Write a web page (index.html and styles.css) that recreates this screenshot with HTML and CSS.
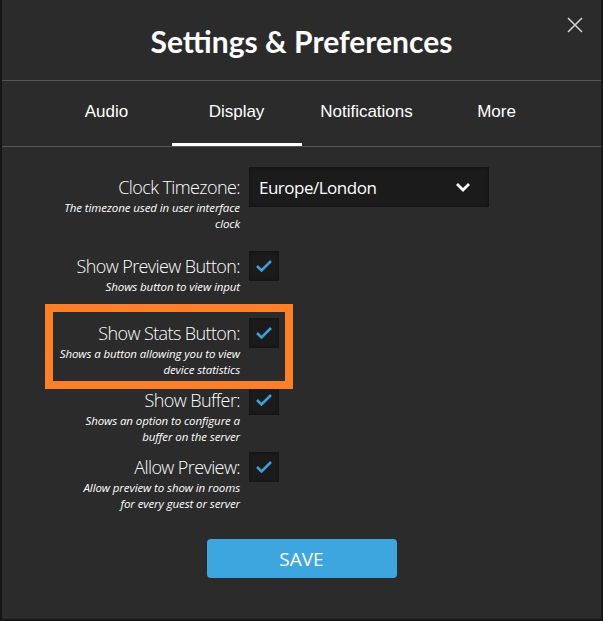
FILE: index.html
```html
<!DOCTYPE html>
<html lang="en">
<head>
    <meta charset="UTF-8">
    <meta name="viewport" content="width=device-width, initial-scale=1.0">
    <title>Settings &amp; Preferences</title>
    <link rel="stylesheet" href="styles.css">
</head>
<body>
    <div class="modal">
        <!-- Cabeçalho do modal -->
        <div class="modal-header">
            <h1>Settings &amp; Preferences</h1>
            <button class="close" aria-label="Close">
                <svg width="16" height="16" viewBox="0 0 16 16"><path d="M1 1 L15 15 M15 1 L1 15" stroke="#cfcfcf" stroke-width="1.6" fill="none"/></svg>
            </button>
        </div>

        <!-- Abas -->
        <div class="tabs">
            <div class="tab">Audio</div>
            <div class="tab active">Display</div>
            <div class="tab">Notifications</div>
            <div class="tab">More</div>
        </div>

        <form class="settings">
            <div class="row row-clock">
                <div class="label-col">
                    <div class="label">Clock Timezone:</div>
                    <div class="desc">The timezone used in user interface<br>clock</div>
                </div>
                <div class="select">
                    <span>Europe/London</span>
                    <svg width="16" height="11" viewBox="0 0 16 11"><path d="M2 2 L8 8 L14 2" stroke="#fff" stroke-width="2.8" fill="none"/></svg>
                </div>
            </div>

            <div class="row">
                <div class="label-col">
                    <div class="label">Show Preview Button:</div>
                    <div class="desc">Shows button to view input</div>
                </div>
                <div class="check"><svg width="30" height="30" viewBox="0 0 30 30"><path d="M8 15 L12.5 19.5 L22 10" stroke="#3c9fda" stroke-width="2.6" fill="none"/></svg></div>
            </div>

            <div class="row highlighted">
                <div class="label-col">
                    <div class="label">Show Stats Button:</div>
                    <div class="desc">Shows a button allowing you to view<br>device statistics</div>
                </div>
                <div class="check"><svg width="30" height="30" viewBox="0 0 30 30"><path d="M8 15 L12.5 19.5 L22 10" stroke="#3c9fda" stroke-width="2.6" fill="none"/></svg></div>
            </div>

            <div class="row">
                <div class="label-col">
                    <div class="label">Show Buffer:</div>
                    <div class="desc">Shows an option to configure a<br>buffer on the server</div>
                </div>
                <div class="check"><svg width="30" height="30" viewBox="0 0 30 30"><path d="M8 15 L12.5 19.5 L22 10" stroke="#3c9fda" stroke-width="2.6" fill="none"/></svg></div>
            </div>

            <div class="row">
                <div class="label-col">
                    <div class="label">Allow Preview:</div>
                    <div class="desc">Allow preview to show in rooms<br>for every guest or server</div>
                </div>
                <div class="check"><svg width="30" height="30" viewBox="0 0 30 30"><path d="M8 15 L12.5 19.5 L22 10" stroke="#3c9fda" stroke-width="2.6" fill="none"/></svg></div>
            </div>

            <button type="button" class="save">SAVE</button>
        </form>
    </div>
</body>
</html>
```

FILE: styles.css
```css
body {
    margin: 0;
    padding: 0;
    background: #161616;
    font-family: 'Open Sans', sans-serif;
    color: #fff;
}

.modal {
    margin-left: 2px;
    width: 599px;
    height: 619px;
    background: #2b2b2b;
}

.modal-header {
    position: relative;
    height: 80px;
    border-bottom: 1px solid #555;
}

.modal-header h1 {
    margin: 0;
    padding-top: 21px;
    text-align: center;
    font-family: 'Lato', sans-serif;
    font-size: 30px;
    font-weight: 700;
    line-height: 40px;
}

.close {
    position: absolute;
    top: 17px;
    right: 18px;
    padding: 0;
    border: none;
    background: none;
    line-height: 0;
}

/* Abas */
.tabs {
    display: flex;
    justify-content: center;
    height: 65px;
    border-bottom: 1px solid #555;
    font-family: 'Liberation Sans', Arial, sans-serif;
    font-size: 17px;
}

.tab {
    box-sizing: border-box;
    width: 130px;
    height: 65px;
    padding-top: 1px;
    text-align: center;
    line-height: 60px;
}

.tab.active {
    border-bottom: 3px solid #fff;
}

/* Formulário */
.settings {
    padding-top: 20px;
}

.row {
    display: flex;
    align-items: flex-start;
    gap: 9px;
    min-height: 62px;
    margin-bottom: 5px;
}

.row-clock {
    min-height: 72px;
    margin-bottom: 12px;
}

.label-col {
    width: 238px;
    text-align: right;
}

.label {
    margin-top: 2px;
    font-size: 18px;
    font-weight: 300;
    line-height: 26px;
    letter-spacing: -0.6px;
}

.row-clock .label {
    margin-top: 7px;
}

.desc {
    font-size: 11.5px;
    font-style: italic;
    line-height: 16px;
    letter-spacing: -0.1px;
}

.select {
    display: flex;
    align-items: center;
    justify-content: space-between;
    box-sizing: border-box;
    width: 240px;
    height: 40px;
    padding: 0 18px 0 10px;
    background: #1b1b1b;
    box-shadow: inset 0 0 4px rgba(0, 0, 0, 0.4);
    font-size: 17px;
    letter-spacing: -0.5px;
}

.check {
    width: 30px;
    height: 30px;
    background: #1b1b1b;
    box-shadow: inset 0 0 4px rgba(0, 0, 0, 0.4);
    line-height: 0;
}

/* Destaque laranja em volta da opção */
.highlighted {
    position: relative;
}

.highlighted::after {
    content: '';
    position: absolute;
    left: 43px;
    top: -14px;
    width: 232px;
    height: 69px;
    border: 8px solid #fd7f27;
}

.save {
    display: block;
    width: 190px;
    height: 39px;
    margin: 25px auto 0;
    border: none;
    border-radius: 4px;
    background: #3ea6de;
    color: #fff;
    font-family: 'Open Sans', sans-serif;
    font-size: 19px;
}
```
